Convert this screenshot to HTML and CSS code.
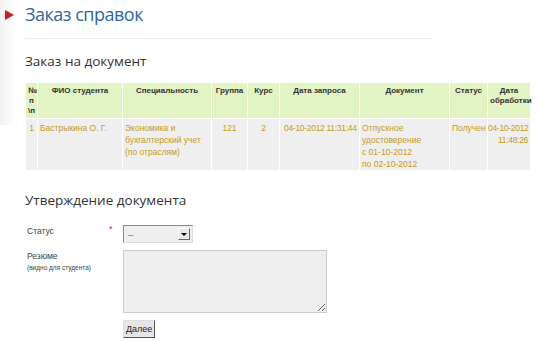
FILE: index.html
```html
<!DOCTYPE html>
<html lang="ru">
<head>
    <meta charset="UTF-8">
    <title>Заказ справок</title>
    <link rel="stylesheet" href="styles.css">
</head>
<body>
    <div class="page">
        <div class="shade"></div>
        <div class="content">
            <h1 class="title">Заказ справок</h1>
            <div class="rule"></div>

            <h2 class="section">Заказ на документ</h2>
            <table class="orders">
                <tr class="head">
                    <th class="c-num">№<br>п<br>\п</th>
                    <th class="c-fio">ФИО студента</th>
                    <th class="c-spec">Специальность</th>
                    <th class="c-group">Группа</th>
                    <th class="c-course">Курс</th>
                    <th class="c-date">Дата запроса</th>
                    <th class="c-doc">Документ</th>
                    <th class="c-status">Статус</th>
                    <th class="c-done">Дата обработки</th>
                </tr>
                <tr class="row">
                    <td class="center">1</td>
                    <td>Бастрыкина О. Г.</td>
                    <td>Экономика и бухгалтерский учет (по отраслям)</td>
                    <td class="center">121</td>
                    <td class="center">2</td>
                    <td class="date">04-10-2012 11:31:44</td>
                    <td>Отпускное удостоверение<br>с 01-10-2012<br>по 02-10-2012</td>
                    <td>Получен</td>
                    <td class="date last">04-10-2012<br>11:48:26</td>
                </tr>
            </table>

            <h2 class="section second">Утверждение документа</h2>
            <form class="approve">
                <div class="field">
                    <label class="label">Статус</label>
                    <span class="req">*</span>
                    <div class="select">
                        <span class="select-val">--</span>
                        <span class="select-btn"><span class="arrow"></span></span>
                    </div>
                </div>
                <div class="field">
                    <label class="label">Резюме<small>(видно для студента)</small></label>
                    <span class="req"></span>
                    <textarea class="resume"></textarea>
                </div>
                <div class="field">
                    <span class="label"></span>
                    <span class="req"></span>
                    <button type="button" class="next">Далее</button>
                </div>
            </form>
        </div>
    </div>
</body>
</html>
```

FILE: styles.css
```css
body {
    margin: 0;
    background-color: #ffffff;
    font-family: "Liberation Sans", Arial, sans-serif;
}
.page {
    position: relative;
    width: 539px;
    height: 341px;
    overflow: hidden;
}
.shade {
    position: absolute;
    left: 0;
    top: 0;
    width: 16px;
    height: 125px;
    background: linear-gradient(to right, #f2f2f2, #ffffff);
}
.content {
    position: relative;
    padding-left: 25px;
}
.title {
    position: relative;
    margin: 0;
    padding-top: 0;
    font-family: "Open Sans", sans-serif;
    font-weight: normal;
    font-size: 18px;
    letter-spacing: -0.5px;
    line-height: 28px;
    color: #2f68a5;
}
.title::before {
    content: "";
    position: absolute;
    left: -20px;
    top: 10px;
    border-top: 5px solid transparent;
    border-bottom: 5px solid transparent;
    border-left: 9px solid #d01e1e;
}
.rule {
    width: 407px;
    margin-top: 10px;
    border-top: 1px solid #eeeeee;
}
.section {
    margin: 12px 0 11px 0;
    font-family: "Open Sans", sans-serif;
    font-weight: normal;
    font-size: 13.5px;
    line-height: 20px;
    color: #333333;
}
.section.second {
    margin-top: 19px;
    margin-bottom: 15px;
}
.orders {
    width: 505px;
    border-collapse: collapse;
    font-size: 8px;
    table-layout: fixed;
}
.orders th, .orders td {
    box-sizing: border-box;
    border: 1px solid #ffffff;
    vertical-align: top;
    padding: 2px 2px;
    line-height: 10px;
}
.orders th {
    background-color: #e2f4c4;
    color: #333333;
    font-weight: bold;
    height: 36px;
    padding-top: 3px;
}
.orders td {
    background-color: #efefef;
    color: #c99a20;
    height: 50px;
    padding-top: 3px;
    padding-bottom: 0;
    font-size: 8.5px;
    line-height: 12px;
}
.orders td.date {
    white-space: nowrap;
    letter-spacing: -0.3px;
    padding-left: 4px;
    padding-right: 1px;
}
.orders td.last {
    text-align: right;
    padding-left: 0;
    padding-right: 2px;
}
.orders .center { text-align: center; }
.c-num { width: 12px; }
.c-fio { width: 85px; }
.c-spec { width: 89px; }
.c-group { width: 36px; }
.c-course { width: 32px; }
.c-date { width: 80px; }
.c-doc { width: 90px; }
.c-status { width: 38px; }
.c-done { width: 43px; }
.approve {
    display: flex;
    flex-direction: column;
    gap: 7px;
    padding-left: 2px;
}
.field {
    display: flex;
    align-items: flex-start;
}
.label {
    width: 82px;
    font-size: 8.5px;
    color: #444444;
    padding-top: 1px;
    line-height: 11px;
}
.label small {
    display: block;
    font-size: 6.5px;
    line-height: 11px;
}
.req {
    width: 14px;
    color: #e02020;
    font-size: 9px;
    line-height: 9px;
}
.select {
    display: flex;
    align-items: center;
    justify-content: space-between;
    box-sizing: border-box;
    width: 70px;
    height: 18px;
    border: 1px solid #8a8a8a;
    border-right-color: #dddddd;
    border-bottom-color: #dddddd;
    background-color: #efefef;
    padding: 0 2px 0 4px;
}
.select-val {
    font-size: 8px;
    color: #333333;
}
.select-btn {
    display: flex;
    align-items: center;
    justify-content: center;
    box-sizing: border-box;
    width: 12px;
    height: 12px;
    background-color: #e8e8e8;
    border: 1px solid #ffffff;
    border-right-color: #666666;
    border-bottom-color: #666666;
}
.arrow {
    border-left: 3px solid transparent;
    border-right: 3px solid transparent;
    border-top: 3px solid #000000;
}
.resume {
    box-sizing: border-box;
    width: 204px;
    height: 63px;
    margin: 0;
    border: 1px solid #cccccc;
    background-color: #eeeeee;
}
.next {
    box-sizing: border-box;
    height: 18px;
    padding: 0 2px;
    font-family: "Liberation Sans", Arial, sans-serif;
    font-size: 9px;
    color: #222222;
    background-color: #e6e6e6;
    border: 1px solid #dddddd;
    border-right-color: #555555;
    border-bottom-color: #555555;
}
```
